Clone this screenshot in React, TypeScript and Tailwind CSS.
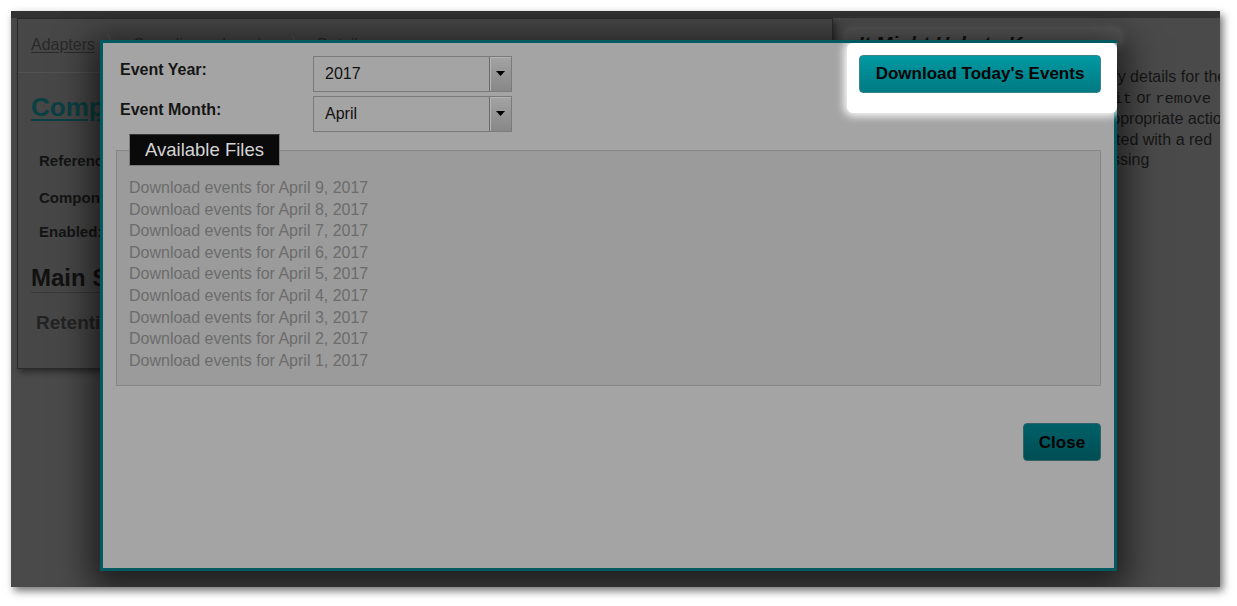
const days = [9, 8, 7, 6, 5, 4, 3, 2, 1];

function Sep() {
  return (
    <svg width="14" height="24" viewBox="0 0 14 24" className="shrink-0">
      <line x1="1" y1="0" x2="13" y2="24" stroke="#5c5c5c" strokeWidth="1" />
    </svg>
  );
}

function Card() {
  return (
    <div className="ml-[6px] w-[816px] h-[351px] shrink-0 border border-[#2b2b2b] bg-[#474747] shadow-[2px_3px_6px_rgba(0,0,0,0.45)]">
      <div className="h-[54px] border-b border-[#535353] pl-[13px] pt-[16px] flex items-start gap-[12px] text-[16px] leading-5 text-[#2a2a2a]">
        <span className="underline decoration-[#2a2a2a] underline-offset-2">Adapters</span>
        <Sep />
        <span className="underline decoration-[#2a2a2a] underline-offset-2">Compliance Logging</span>
        <Sep />
        <span>Details</span>
      </div>
      <h1 className="mt-[18px] pl-[13px] text-[26px] leading-8 font-bold text-[#0a4043] underline underline-offset-[3px]">
        Component Details
      </h1>
      <div className="pl-[21px] text-[15px] leading-5 font-bold text-[#141414]">
        <div className="mt-[28px]">Reference Name:</div>
        <div className="mt-[17px]">Component Type:</div>
        <div className="mt-[14px]">Enabled:</div>
      </div>
      <h2 className="mt-[22px] mx-[13px] border-b border-[#383838] text-[24px] leading-7 font-bold text-[#111]">
        Main Settings
      </h2>
      <h3 className="mt-[18px] pl-[18px] text-[19px] leading-6 font-bold text-[#232323]">Retention Policy</h3>
    </div>
  );
}

function HelpColumn() {
  const mono = "font-['Liberation_Mono','Courier_New',monospace] text-[15.5px]";
  return (
    <div className="ml-[25px] w-[362px] shrink-0 text-[#161616]">
      <div className="mt-[9px] -ml-[15px] w-[280px] h-[20px] rounded-[10px] bg-[#585858] shadow-[0_0_6px_2px_#585858] pl-[15px] pt-[5px]">
        <div className="text-[20px] leading-6 font-bold italic text-[#111] whitespace-nowrap">It Might Help to Know</div>
      </div>
      <div className="mt-[20px] text-[16px] leading-[20.5px] whitespace-nowrap">
        <div>Use this page to easily view or modify details for the selected</div>
        <div className="-ml-[5px]">
          component. Select a row and use <span className={mono}>edit</span> or <span className={mono}>remove</span>
        </div>
        <div className="-ml-[2px]">buttons on the toolbars to take the appropriate action.</div>
        <div className="-ml-[7px]">Any invalid settings would be highlighted with a red</div>
        <div className="-ml-[12px]">border, and required fields that are missing</div>
      </div>
    </div>
  );
}

function Select({ value }: { value: string }) {
  return (
    <div className="w-[199px] h-[36px] border border-[#7b7b7b] flex items-center">
      <span className="flex-1 pl-[11px] text-[16px] text-[#111]">{value}</span>
      <div className="w-[22px] h-full border-l border-[#6a6a6a] bg-linear-to-b from-[#a3a3a3] to-[#888888] shadow-[inset_1px_1px_0_#b4b4b4] flex items-center justify-center pb-[2px]">
        <svg width="9" height="5" viewBox="0 0 9 5">
          <polygon points="0,0 9,0 4.5,5" fill="#000" />
        </svg>
      </div>
    </div>
  );
}

function Modal() {
  return (
    <div className="absolute left-[89px] top-[29px] w-[1017px] h-[531px] border-[3px] border-[#005a60] bg-[#a4a4a4] px-[13px] pt-[12px] shadow-[0_8px_32px_10px_rgba(0,0,0,0.6)]">
      <div className="absolute left-[744px] top-0 right-[-3px] h-[70px] bg-white rounded-[6px] shadow-[0_0_8px_3px_#ffffff] [clip-path:inset(0_0_-14px_-14px)]" />
      <div className="flex justify-between">
        <div className="grid grid-cols-[197px_199px] gap-y-[4px] mt-[1px]">
          <div className="pl-[4px] pt-[4px] text-[16px] leading-5 font-bold text-[#161616]">Event Year:</div>
          <Select value="2017" />
          <div className="pl-[4px] pt-[4px] text-[16px] leading-5 font-bold text-[#161616]">Event Month:</div>
          <Select value="April" />
        </div>
        <button className="relative z-10 w-[242px] h-[38px] rounded-[4px] border border-[#3e8389] bg-linear-to-b from-[#0099a2] to-[#007a83] text-[17px] font-bold text-[#050505]">
          Download Today's Events
        </button>
      </div>
      <fieldset className="mt-[2px] border border-[#878787] bg-[#9b9b9b] px-[12px] pt-[11px] pb-[14px]">
        <legend className="h-[32px] px-[15px] border border-[#7b7b7b] border-t-[#333] bg-[#0a0a0a] text-[18.5px] leading-[30px] text-[#d4d4d4]">
          Available Files
        </legend>
        <ul className="text-[16px] leading-[21.6px] text-[#6c6c6c]">
          {days.map((d) => (
            <li key={d}>Download events for April {d}, 2017</li>
          ))}
        </ul>
      </fieldset>
      <div className="flex justify-end mt-[37px]">
        <button className="w-[78px] h-[38px] rounded-[4px] border border-[#2f6166] bg-linear-to-b from-[#006067] to-[#004e54] text-[17px] font-bold text-[#030303]">
          Close
        </button>
      </div>
    </div>
  );
}

export default function App() {
  return (
    <div className="w-[1237px] h-[606px] bg-white pt-[11px] pl-[11px] overflow-hidden font-['Liberation_Sans',Arial,sans-serif]">
      <div className="relative w-[1209px] h-[576px] overflow-hidden bg-[#4a4a4a] shadow-[3px_4px_8px_rgba(0,0,0,0.55)]">
        <div className="h-[7px] bg-[#333333]" />
        <div className="flex">
          <Card />
          <HelpColumn />
        </div>
        <Modal />
      </div>
    </div>
  );
}
